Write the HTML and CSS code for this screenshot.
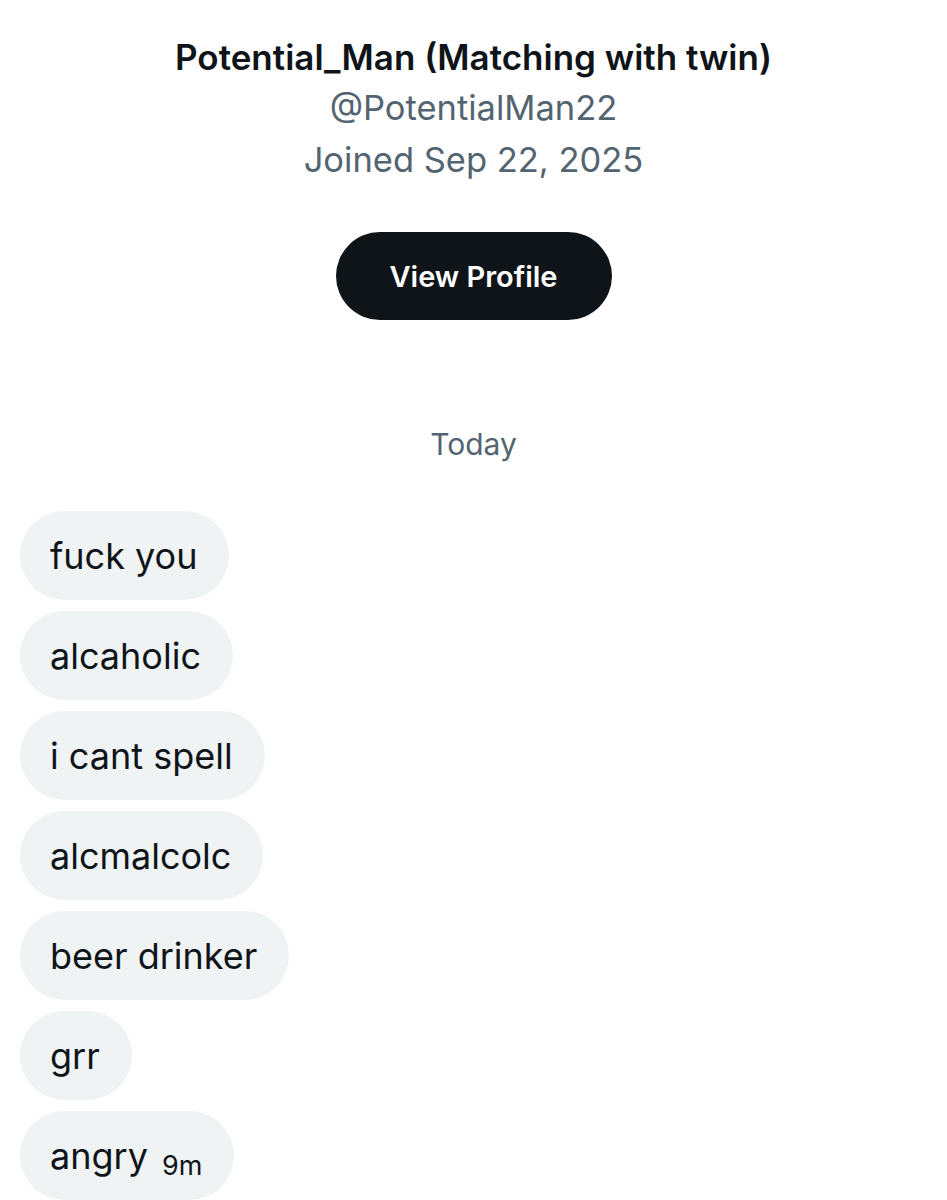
FILE: index.html
```html
<!DOCTYPE html>
<html lang="en">

<head>
  <meta charset="UTF-8">
  <meta name="viewport" content="width=device-width, initial-scale=1.0">
  <title>Messages</title>
  <link rel="stylesheet" href="styles.css">
</head>

<body>
  <div class="profile">
    <h1 class="name">Potential_Man (Matching with twin)</h1>
    <div class="handle">@PotentialMan22</div>
    <div class="joined">Joined Sep 22, 2025</div>
    <a href="#" class="btn">View Profile</a>
  </div>

  <div class="day">Today</div>

  <ul class="msgs">
    <li><span class="bubble">fuck you</span></li>
    <li><span class="bubble">alcaholic</span></li>
    <li><span class="bubble">i cant spell</span></li>
    <li><span class="bubble">alcmalcolc</span></li>
    <li><span class="bubble">beer drinker</span></li>
    <li><span class="bubble">grr</span></li>
    <li><span class="bubble">angry <small class="time">9m</small></span></li>
  </ul>
</body>

</html>
```

FILE: styles.css
```css
* {
  margin: 0;
  padding: 0
}

ul {
  list-style: none
}

body {
  font-family: Inter, "Noto Sans", sans-serif;
  background-color: #fff;
  color: #0f1419;
}

.profile {
  display: flex;
  flex-direction: column;
  align-items: center;
  padding-top: 32px;
}

.name {
  font-size: 35px;
  font-weight: 600;
  line-height: 50px;
}

.handle,
.joined {
  font-size: 34.5px;
  line-height: 52px;
  color: #536471;
}

.btn {
  display: flex;
  align-items: center;
  justify-content: center;
  width: 276px;
  height: 88px;
  margin-top: 46px;
  border-radius: 44px;
  background-color: #0f1419;
  color: #fff;
  font-size: 29px;
  font-weight: 600;
  text-decoration: none;
}

.day {
  margin-top: 104px;
  text-align: center;
  font-size: 30px;
  line-height: 40px;
  color: #536471;
}

.msgs {
  display: flex;
  flex-direction: column;
  align-items: flex-start;
  gap: 11px;
  padding: 47px 20px 0;
}

.bubble {
  display: flex;
  align-items: center;
  height: 89px;
  padding: 0 32px 0 30px;
  border-radius: 45px;
  background-color: #eff3f4;
  font-size: 36px;
  white-space: nowrap;
}

.time {
  position: relative;
  top: 10px;
  margin-left: 14px;
  font-size: 27px;
}
```
